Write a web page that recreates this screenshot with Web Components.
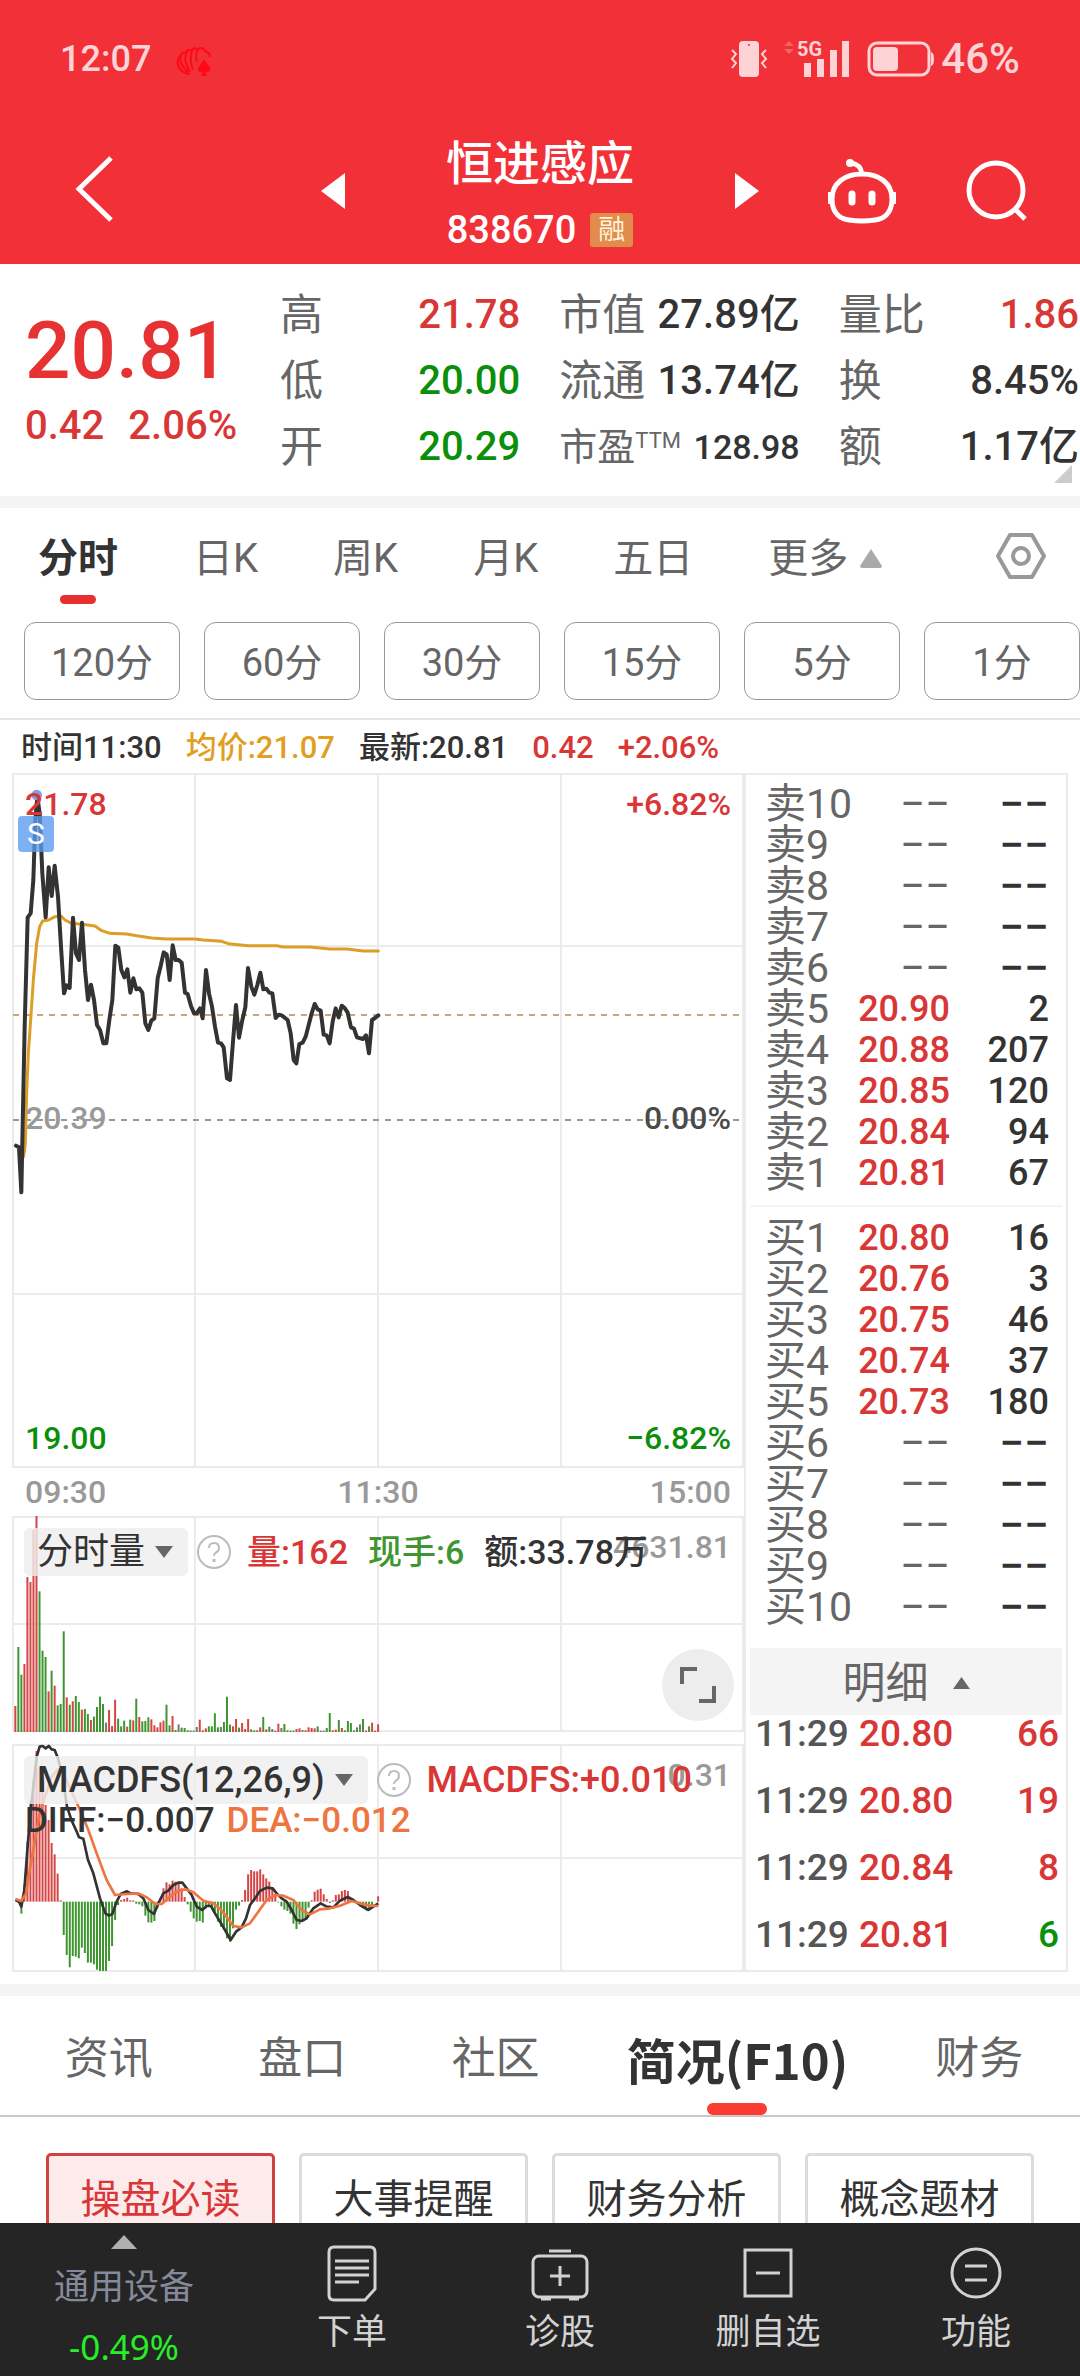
<!DOCTYPE html>
<html lang="zh-CN">
<head>
<meta charset="utf-8">
<meta name="viewport" content="width=device-width, initial-scale=1">
<title>恒进感应 838670</title>
<style>
    :root {
        --red: #d93636;
        --green: #0a8f0a;
        --ink: #333;
        --label: #666;
        --muted: #999;
        --line: #ebebeb;
        --band: #f4f4f4;
    }
    body {
        margin: 0;
        height: 100vh;
        display: flex;
        flex-direction: column;
        background: #fff;
        color: var(--ink);
        font-family: Roboto, "Noto Sans CJK SC", sans-serif;
    }
    main {
        flex: 1;
        min-height: 0;
        overflow: hidden;
    }
    .band {
        height: 12px;
        background: var(--band);
    }
    .trade {
        display: flex;
        padding: 0 12px;
        margin-bottom: 12px;
    }
    .charts {
        flex: 1;
        min-width: 0;
    }
</style>
</head>
<body>
    <status-bar></status-bar>
    <stock-header code="838670" tag="融">恒进感应</stock-header>
    <main>
        <quote-panel></quote-panel>
        <div class="band"></div>
        <period-tabs></period-tabs>
        <minute-pills></minute-pills>
        <chart-info></chart-info>
        <div class="trade">
            <div class="charts">
                <price-chart></price-chart>
                <volume-chart></volume-chart>
                <macd-chart></macd-chart>
            </div>
            <order-book></order-book>
        </div>
        <div class="band"></div>
        <section-tabs></section-tabs>
        <card-links></card-links>
    </main>
    <bottom-bar></bottom-bar>

<script>
const reset = `
    * { box-sizing: border-box; }
    button {
        margin: 0;
        padding: 0;
        border: 0;
        background: none;
        color: inherit;
        font: inherit;
        cursor: pointer;
    }
    a { color: inherit; text-decoration: none; }
    svg { display: block; }
    table { border-collapse: collapse; }
    .red { color: var(--red); }
    .green { color: var(--green); }
`

function define(name, render) {
    class El extends HTMLElement {
        constructor() {
            super()
            this.attachShadow({ mode: 'open' })
        }
        connectedCallback() {
            const template = document.createElement('template')
            template.innerHTML = `<style>${reset}</style>` + render(this)
            this.shadowRoot.replaceChildren(template.content.cloneNode(true))
        }
    }
    window.customElements.define(name, El)
}

define('status-bar', () => `
<style>
    :host {
        display: flex;
        align-items: center;
        padding: 36px 60px 0 60px;
        height: 82px;
        box-sizing: border-box;
        background: #f13037;
        color: #fdd3d5;
        font-weight: 500;
        font-size: 36px;
        line-height: 46px;
    }
    .fan { margin-left: 25px; margin-top: 4px; }
    .right {
        display: flex;
        align-items: center;
        margin-left: auto;
    }
    .net { margin-left: 16px; overflow: visible; }
    .bat { margin-left: 17px; margin-right: 6px; }
    .pct { font-size: 42px; }
</style>
<span>12:07</span>
<svg class="fan" width="37" height="32" viewBox="0 0 37 32" fill="none" stroke="#ff0a14" stroke-width="2">
    <path d="M14 29 C2 27 1 20 2 14 M12 27 C3 18 3 14 6 8 M14 27 C8 16 8 11 12 5 M17 25 C13 14 14 8 18 3 M21 17 C19 10 21 5 24 3 M2 14 Q5 11 6 8 Q10 8 12 5 Q16 6 18 3 Q21 5 24 3 Q28 3 29 6 Q34 8 34 12"/>
    <path fill="#ff0a14" stroke="none" d="M28 14 C30 19 35 21 34 25 C33 28 30 27 29 26 L31 31 H25 L27 26 C25 28 21 27 22 24 C22 21 26 19 28 14Z"/>
</svg>
<div class="right">
    <svg width="38" height="38" viewBox="0 0 38 38" fill="none" stroke="#fdd3d5" stroke-width="2">
        <rect x="9" y="1" width="20" height="36" rx="4" fill="#fdd3d5" stroke="none"/>
        <circle cx="19" cy="5" r="1" fill="#f13037" stroke="none"/>
        <path d="M2 10 L6 14 L2 19 L6 23 L2 28 M36 10 L32 14 L36 19 L32 23 L36 28"/>
    </svg>
    <svg class="net" width="66" height="38" viewBox="0 0 66 38" fill="#fdd3d5">
        <path d="M0 6 L5 1 L10 6Z M0 9 L5 14 L10 9Z" opacity=".3"/>
        <text x="13" y="16" font-size="20" font-weight="700">5G</text>
        <path d="M20 23h7v14h-7z M33 19h7v18h-7z M46 10h7v27h-7z M58 1h7v36h-7z"/>
    </svg>
    <svg class="bat" width="68" height="36" viewBox="0 0 68 36" fill="none" stroke="#fdd3d5" stroke-width="3">
        <rect x="2" y="2" width="60" height="32" rx="8"/>
        <rect x="6" y="6" width="25" height="24" rx="4" fill="#fdd3d5" stroke="none"/>
        <path d="M64 11 q3 1 3 7 t-3 7z" fill="#fdd3d5" stroke="none"/>
    </svg>
    <span class="pct">46%</span>
</div>`)

define('stock-header', el => `
<style>
    :host {
        display: grid;
        grid-template-columns: 1fr 438px 1fr;
        align-items: center;
        padding: 36px 52px 0;
        height: 182px;
        box-sizing: border-box;
        background: #f13037;
        color: #fff;
    }
    .back { padding-left: 20px; }
    .mid {
        display: flex;
        align-items: center;
        justify-content: space-between;
    }
    h1 {
        margin: 12px 0 0;
        font-weight: 500;
        font-size: 47px;
        line-height: 66px;
        text-align: center;
    }
    .code {
        display: flex;
        align-items: center;
        justify-content: center;
        gap: 14px;
        font-size: 38px;
        font-weight: 500;
        line-height: 66px;
    }
    .tag {
        padding: 0 8px;
        border-radius: 3px;
        background: #e28c4b;
        color: #fff3dc;
        font-size: 27px;
        font-weight: 400;
        line-height: 34px;
    }
    .tools {
        display: flex;
        justify-content: flex-end;
        align-items: center;
        gap: 69px;
    }
</style>
<div class="back">
    <button aria-label="返回">
        <svg width="44" height="68" viewBox="0 0 44 68" fill="none" stroke="#fff" stroke-width="5"><path d="M39 3 L7 34 L39 65"/></svg>
    </button>
</div>
<div class="mid">
    <button aria-label="上一只"><svg width="24" height="36" viewBox="0 0 24 36" fill="#fff"><path d="M24 0V36L0 18Z"/></svg></button>
    <div>
        <h1><slot></slot></h1>
        <div class="code"><span>${el.getAttribute('code')}</span><span class="tag">${el.getAttribute('tag')}</span></div>
    </div>
    <button aria-label="下一只"><svg width="24" height="36" viewBox="0 0 24 36" fill="#fff"><path d="M0 0V36L24 18Z"/></svg></button>
</div>
<div class="tools">
    <button aria-label="智能助手">
        <svg width="70" height="66" viewBox="0 0 70 66" fill="none" stroke="#fff" stroke-width="5">
            <path d="M35 16 C52 16 65 25 65 41 C65 56 56 61 48 62 Q35 64 22 62 C14 61 5 56 5 41 C5 25 18 16 35 16Z"/>
            <path d="M35 16 C34 9 31 6 24 5"/>
            <circle cx="23" cy="5" r="4" fill="#fff" stroke="none"/>
            <path d="M3 34V46 M67 34V46" stroke-width="4"/>
            <path d="M25 36V44 M45 36V44" stroke-width="7" stroke-linecap="round"/>
        </svg>
    </button>
    <button aria-label="搜索">
        <svg width="62" height="62" viewBox="0 0 62 62" fill="none" stroke="#fff" stroke-width="5"><circle cx="30" cy="30" r="27"/><path d="M49 49 L59 59"/></svg>
    </button>
</div>`)

const stats = [
    [['高', '21.78', 'red'], ['低', '20.00', 'green'], ['开', '20.29', 'green']],
    [['市值', '27.89亿', ''], ['流通', '13.74亿', ''], ['市盈<sup>TTM</sup>', '128.98', 'small']],
    [['量比', '1.86', 'red'], ['换', '8.45%', ''], ['额', '1.17亿', '']],
]

define('quote-panel', () => `
<style>
    :host {
        display: grid;
        grid-template-columns: 216px repeat(3, 1fr);
        column-gap: 39px;
        align-items: center;
        padding: 18px 1px 16px 25px;
        position: relative;
    }
    .now {
        font-size: 80px;
        font-weight: 500;
        line-height: 90px;
        color: #e63232;
    }
    .diff {
        display: flex;
        gap: 24px;
        font-size: 40px;
        font-weight: 500;
        line-height: 60px;
        white-space: nowrap;
    }
    dl { margin: 0; }
    dl div {
        display: flex;
        justify-content: space-between;
        line-height: 66px;
        white-space: nowrap;
    }
    dt { font-size: 43px; color: var(--label); }
    dd { margin: 0; font-size: 40px; font-weight: 500; }
    .wrap-small dt { font-size: 38px; }
    .wrap-small dd { font-size: 34px; }
    sup { font-size: 22px; line-height: 0; vertical-align: 12px; }
    .more {
        position: absolute;
        right: 8px;
        bottom: 13px;
    }
</style>
<div>
    <div class="now">20.81</div>
    <div class="diff red"><span>0.42</span><span>2.06%</span></div>
</div>
${stats.map(col => `<dl>${col.map(([k, v, c]) => `<div class="wrap-${c}"><dt>${k}</dt><dd class="${c}">${v}</dd></div>`).join('')}</dl>`).join('')}
<svg class="more" width="18" height="18" viewBox="0 0 18 18" fill="#ccc"><path d="M18 0V18H0Z"/></svg>`)

define('period-tabs', () => `
<style>
    :host {
        display: flex;
        align-items: flex-start;
        gap: 75px;
        padding: 22px 34px 18px 38px;
        font-size: 40px;
        line-height: 58px;
        color: var(--label);
    }
    button {
        display: flex;
        align-items: center;
        white-space: nowrap;
    }
    .on {
        flex-direction: column;
        color: var(--ink);
        font-weight: 700;
    }
    .on::after {
        content: "";
        width: 36px;
        height: 9px;
        margin-top: 7px;
        border-radius: 5px;
        background: #e62f2f;
    }
    .more { gap: 11px; }
    .set { margin-left: auto; margin-top: 2px; }
</style>
<button class="on">分时</button>
<button>日K</button>
<button>周K</button>
<button>月K</button>
<button>五日</button>
<button class="more">更多<svg width="24" height="20" viewBox="0 0 24 20" fill="#aaa"><path d="M12 0 L23 17 Q23 19 21 19 H3 Q1 19 1 17Z"/></svg></button>
<button class="set" aria-label="设置">
    <svg width="50" height="48" viewBox="0 0 50 48" fill="none" stroke="#999" stroke-width="4" stroke-linejoin="round">
        <path d="M14 3 H36 L48 24 L36 45 H14 L2 24Z"/><circle cx="25" cy="24" r="8"/>
    </svg>
</button>`)

define('minute-pills', () => `
<style>
    :host {
        display: grid;
        grid-template-columns: repeat(6, 1fr);
        gap: 24px;
        padding: 0 0 18px 24px;
        border-bottom: 2px solid #e6e6e6;
    }
    button {
        padding-top: 4px;
        border: 1px solid #999;
        border-radius: 12px;
        color: var(--label);
        font-size: 38px;
        line-height: 72px;
    }
</style>
${['120分', '60分', '30分', '15分', '5分', '1分'].map(t => `<button>${t}</button>`).join('')}`)

define('chart-info', () => `
<style>
    :host {
        display: flex;
        gap: 24px;
        padding: 3px 21px 0;
        font-size: 31px;
        line-height: 50px;
        white-space: nowrap;
        font-weight: 500;
    }
    .avg { color: #dfa01f; }
</style>
<span>时间11:30</span>
<span class="avg">均价:21.07</span>
<span>最新:20.81</span>
<span class="red">0.42</span>
<span class="red">+2.06%</span>`)

const paneStyle = `
    :host { display: block; }
    .pane { position: relative; }
    .pane > svg { width: 100%; height: auto; }
    .lb {
        position: absolute;
        font-size: 32px;
        font-weight: 500;
        line-height: 40px;
    }
    .l { left: 13px; }
    .r { right: 13px; }
    .grey { color: var(--muted); }
    .legend {
        position: absolute;
        left: 12px;
        top: 12px;
        display: flex;
        align-items: center;
        white-space: nowrap;
        font-weight: 500;
        line-height: 48px;
    }
    .pick {
        display: flex;
        align-items: center;
        gap: 10px;
        padding: 0 15px 0 13px;
        border-radius: 6px;
        background: rgba(238, 238, 238, .8);
    }
    .help { margin: 0 15px 0 8px; }
`

const caret = '<svg width="18" height="12" viewBox="0 0 18 12" fill="#666"><path d="M0 0H18L9 12Z"/></svg>'
const help = `<button class="help" aria-label="说明"><svg width="36" height="36" viewBox="0 0 36 36" fill="none" stroke="#bbb" stroke-width="2">
    <circle cx="18" cy="18" r="16"/><path d="M13 14 Q13 9 18 9 T23 14 Q23 17 20 18.500 Q18 20 18 22"/><path d="M18 25V28" stroke-width="3"/></svg></button>`

// frame, three columns and a list of horizontal rules
function grid(h, rows) {
    return `<g fill="none" stroke="#ebebeb" stroke-width="2">
        <path d="M1 1H731V${h - 1}H1Z M183 1V${h - 1} M366 1V${h - 1} M549 1V${h - 1}"/>
        ${rows.map(y => `<path d="M1 ${y}H731"/>`).join('')}
    </g>`
}

// one bar per minute, the series is drawn at three units to the pixel
const barX = i => 46 + 9.07 * i

const priceLine = '48,1157 57,1162 64,1297 74,800 83,472 92,460 100,360 106,180 112,110 119,160 127,340 137,472 146,322 155,408 164,317 174,410 183,560 192,700 200,676 209,684 219,473 228,580 237,600 246,488 255,630 264,720 273,674 282,720 291,795 300,810 310,850 319,850 328,780 337,720 346,557 355,563 364,630 373,652 382,628 391,698 400,655 409,688 418,685 427,698 436,790 445,810 454,782 463,775 473,655 482,618 491,577 500,583 509,660 518,556 527,600 536,600 545,608 555,698 563,702 573,738 582,760 590,760 600,745 608,775 618,630 627,700 636,740 645,800 654,848 663,850 671,862 681,955 690,960 699,845 708,735 717,833 727,780 736,742 744,624 754,680 763,704 772,675 781,638 790,688 799,686 808,698 817,700 827,774 836,764 845,766 863,780 872,820 881,900 889,910 898,852 908,848 917,830 935,760 944,732 953,748 962,752 971,824 980,826 989,850 998,785 1007,745 1016,772 1025,737 1034,744 1043,758 1053,802 1062,806 1071,832 1089,837 1098,826 1107,880 1116,780 1125,774 1135,766'
const avgLine = '71,1190 76,1150 80,1000 85,880 92,780 100,660 110,550 119,500 128,483 146,480 165,470 183,468 195,480 215,490 246,493 285,498 305,512 330,520 380,522 410,527 455,534 500,537 585,537 610,540 665,544 685,551 745,557 830,557 850,561 930,561 990,567 1040,567 1090,573 1135,573'

define('price-chart', () => `
<style>
    ${paneStyle}
    .s {
        position: absolute;
        left: 6px;
        top: 43px;
        width: 36px;
        border-radius: 4px;
        background: rgba(90, 155, 240, .78);
        color: #fff;
        font-size: 30px;
        line-height: 36px;
        text-align: center;
    }
    .zero { color: #4a4a4a; }
    .times {
        display: grid;
        grid-template-columns: repeat(3, 1fr);
        padding: 0 13px;
        color: var(--muted);
        font-size: 32px;
        font-weight: 500;
        line-height: 48px;
        text-align: center;
    }
    .times :first-child { text-align: left; }
    .times :last-child { text-align: right; }
</style>
<div class="pane">
    <svg viewBox="0 0 732 695">
        ${grid(695, [173, 521])}
        <path d="M1 242H730" stroke="#c9a877" stroke-width="2" stroke-dasharray="6 6"/>
        <path d="M1 347H730" stroke="#999" stroke-width="2" stroke-dasharray="6 6"/>
        <g transform="translate(-12 -13) scale(.33333)" fill="none" stroke-linejoin="round" stroke-linecap="round">
            <polyline points="${avgLine}" stroke="#dc9e24" stroke-width="9"/>
            <polyline points="${priceLine}" stroke="#333" stroke-width="12"/>
            <circle cx="110" cy="105" r="16" fill="#7f9fe6"/>
        </g>
    </svg>
    <div class="s">S</div>
    <div class="lb l red" style="top:11px">21.78</div>
    <div class="lb r red" style="top:11px">+6.82%</div>
    <div class="lb l grey" style="top:325px">20.39</div>
    <div class="lb r zero" style="top:325px">0.00%</div>
    <div class="lb l green" style="top:645px">19.00</div>
    <div class="lb r green" style="top:645px">−6.82%</div>
</div>
<div class="times"><span>09:30</span><span>11:30</span><span>15:00</span></div>`)

const volume = 'r78 g255 g172 r204 r465 r450 r606 r648 g422 g244 g225 r122 g184 r139 g80 g84 g302 r104 g82 r92 g108 g90 r67 g69 g54 r36 g46 g75 g106 g84 n28 r66 r18 r97 g40 g17 g34 r16 g37 r35 g100 r45 g32 g33 g44 r38 r20 r14 r29 r34 g82 g20 r48 g6 n23 g13 g12 g5 g4 g4 n15 r37 g5 r11 g17 g17 g56 g14 n15 g30 g106 g22 r17 r39 g13 r27 r9 r39 g8 g5 r5 r14 g45 r8 g16 n9 r4 r25 n12 g24 g5 g4 g4 r9 r11 n6 r5 r14 r12 r11 g17 n4 n4 g12 g57 r5 r7 g36 r12 g5 g33 g27 n5 g14 n23 g39 r4 g17 r28 r4 r23'
const tone = { r: '#d64545', g: '#3f9630', n: '#777' }

define('volume-chart', () => `
<style>
    ${paneStyle}
    :host { margin-bottom: 12px; }
    .legend { font-size: 34px; }
    .pick { font-size: 36px; font-weight: 400; }
    .vals { display: flex; gap: 20px; }
    .full {
        position: absolute;
        right: 10px;
        bottom: 11px;
        width: 72px;
        height: 72px;
        border-radius: 50%;
        background: #ededed;
    }
    .full svg { margin: 0 auto; }
</style>
<div class="pane">
    <svg viewBox="0 0 732 216">
        ${grid(216, [108])}
        <g transform="translate(-12 0) scale(.33333)">
            ${volume.split(' ').map((v, i) => `<rect x="${barX(i) - 3}" y="${648 - v.slice(1)}" width="6" height="${v.slice(1)}" fill="${tone[v[0]]}"/>`).join('')}
        </g>
    </svg>
    <div class="lb r grey" style="top:11px">4631.81</div>
    <div class="legend">
        <button class="pick">分时量${caret}</button>${help}
        <div class="vals"><span class="red">量:162</span><span style="color:#3f9630">现手:6</span><span>额:33.78万</span></div>
    </div>
    <button class="full" aria-label="全屏"><svg width="38" height="38" viewBox="0 0 38 38" fill="none" stroke="#666" stroke-width="4"><path d="M3 18V3H18 M20 35H35V20"/></svg></button>
</div>`)

const macd = [0, 0, -36, 50, 180, 300, 368, 452, 400, 350, 290, 245, 176, 142, 84, 4, -100, -160, -197, -163, -165, -170, -138, -154, -183, -183, -188, -204, -208, -208, -208, -178, -133, -55, -10, 5, 8, 12, 4, 4, -6, -8, -14, -42, -62, -63, -58, -20, 2, 40, 58, 52, 63, 60, 58, 40, 14, -8, -30, -50, -60, -58, -63, -20, -12, -14, -30, -60, -75, -85, -110, -120, -80, -24, -12, 5, 35, 82, 95, 91, 91, 97, 82, 70, 60, 38, 20, -2, -14, -24, -28, -36, -66, -82, -68, -58, -50, -18, 4, 30, 36, 39, 22, 8, -4, 4, 20, 22, 32, 35, 32, 10, 4, -4, -12, -14, -20, -26, -14, 0, 16]
const diffLine = '46,510 57,515 64,530 73,480 82,360 91,250 100,170 110,80 119,50 128,48 137,55 146,48 155,58 164,60 174,85 183,120 192,170 201,230 215,272 228,300 237,322 250,326 264,390 280,430 300,505 316,550 327,557 337,552 350,515 362,492 381,484 392,490 415,492 430,505 445,540 462,552 475,520 490,490 505,482 520,465 535,458 547,458 560,475 575,495 590,530 607,540 620,528 633,528 645,550 660,575 675,600 692,630 708,605 725,592 738,565 750,525 765,505 780,483 800,473 818,475 830,490 845,505 860,515 875,540 890,570 905,573 920,565 940,535 962,520 980,530 1000,532 1020,512 1043,501 1060,510 1080,525 1105,540 1120,530 1135,520'
const deaLine = '46,507 64,513 78,490 91,410 105,330 119,250 137,195 155,140 174,118 190,130 210,175 240,240 265,300 290,370 320,450 345,495 380,492 415,490 440,502 465,522 485,522 510,500 535,482 557,478 580,487 610,512 640,520 660,537 680,560 700,588 725,592 750,580 775,545 800,510 825,495 850,497 880,510 905,540 930,553 960,538 990,535 1020,527 1055,513 1080,520 1110,527 1135,528'

define('macd-chart', () => `
<style>
    ${paneStyle}
    .legend { font-size: 36px; }
    .second {
        position: absolute;
        left: 13px;
        top: 57px;
        display: flex;
        gap: 12px;
        font-size: 35px;
        font-weight: 500;
        line-height: 40px;
        white-space: nowrap;
    }
    .dea { color: #ee7540; }
</style>
<div class="pane">
    <svg viewBox="0 0 732 228">
        ${grid(228, [114])}
        <g transform="translate(-12 -14) scale(.33333)">
            ${macd.map((v, i) => `<rect x="${barX(i) - 3}" y="${v > 0 ? 515 - v : 515}" width="6" height="${Math.abs(v)}" fill="${v > 0 ? tone.r : tone.g}"/>`).join('')}
            <g fill="none" stroke-linejoin="round">
                <polyline points="${diffLine}" stroke="#333" stroke-width="8"/>
                <polyline points="${deaLine}" stroke="#ee7540" stroke-width="8"/>
            </g>
        </g>
    </svg>
    <div class="lb r grey" style="top:11px">0.31</div>
    <div class="legend">
        <button class="pick">MACDFS(12,26,9)${caret}</button>${help}
        <span class="red">MACDFS:+0.010</span>
    </div>
    <div class="second"><span>DIFF:−0.007</span><span class="dea">DEA:−0.012</span></div>
</div>`)

const none = '−−'
const asks = [['卖10'], ['卖9'], ['卖8'], ['卖7'], ['卖6'], ['卖5', '20.90', 2], ['卖4', '20.88', 207], ['卖3', '20.85', 120], ['卖2', '20.84', 94], ['卖1', '20.81', 67]]
const bids = [['买1', '20.80', 16], ['买2', '20.76', 3], ['买3', '20.75', 46], ['买4', '20.74', 37], ['买5', '20.73', 180], ['买6'], ['买7'], ['买8'], ['买9'], ['买10']]
const ticks = [['11:29', '20.80', 66, 'red'], ['11:29', '20.80', 19, 'red'], ['11:29', '20.84', 8, 'red'], ['11:29', '20.81', 6, 'green']]

const level = ([name, price, vol]) => `<tr><th>${name}</th>${price
    ? `<td class="red">${price}</td><td>${vol}</td>`
    : `<td class="none grey">${none}</td><td class="none">${none}</td>`}</tr>`

define('order-book', () => `
<style>
    :host {
        display: block;
        width: 324px;
        box-sizing: border-box;
        padding: 9px 4px 0;
        border: 2px solid #ebebeb;
    }
    table {
        width: 100%;
        table-layout: fixed;
        font-size: 36px;
        font-weight: 500;
    }
    th, td { padding: 0; text-align: right; }
    .levels th, .levels td {
        height: 41px;
        line-height: 41px;
    }
    .levels th {
        width: 106px;
        padding-left: 15px;
        box-sizing: border-box;
        font-size: 41px;
        font-weight: 400;
        color: var(--label);
        text-align: left;
        white-space: nowrap;
    }
    .levels td:nth-child(2) { width: 94px; }
    .levels td:last-child { padding-right: 13px; }
    .levels .none { font-size: 44px; font-weight: 400; }
    .levels .none:last-child { font-weight: 500; }
    .grey { color: var(--label); }
    hr {
        margin: 11px 0;
        border: 0;
        border-top: 2px solid var(--band);
    }
    .detail {
        display: flex;
        align-items: center;
        justify-content: center;
        gap: 24px;
        width: 100%;
        margin-top: 20px;
        padding-top: 3px;
        background: var(--band);
        color: var(--label);
        font-size: 43px;
        line-height: 64px;
    }
    .ticks { font-size: 37px; }
    .ticks td { line-height: 38px; padding-bottom: 29px; }
    .ticks tr:last-child td { padding-bottom: 16px; }
    .ticks td:first-child { width: 109px; padding-left: 5px; color: #555; text-align: left; }
    .ticks td:nth-child(2) { width: 94px; text-align: left; }
    .ticks td:last-child { padding-right: 3px; }
</style>
<table class="levels">${asks.map(level).join('')}</table>
<hr>
<table class="levels">${bids.map(level).join('')}</table>
<button class="detail">明细<svg width="17" height="12" viewBox="0 0 17 12" fill="#666"><path d="M8.500 0L17 12H0Z"/></svg></button>
<table class="ticks">${ticks.map(([t, p, v, c]) => `<tr><td>${t}</td><td class="red">${p}</td><td class="${c}">${v}</td></tr>`).join('')}</table>`)

define('section-tabs', () => `
<style>
    :host {
        display: grid;
        grid-template-columns: 2fr 2fr 2fr 3fr 2fr;
        padding: 31px 4px 0 12px;
        border-bottom: 2px solid #c8c8c8;
        color: var(--label);
        font-size: 44px;
        line-height: 64px;
    }
    button {
        display: flex;
        flex-direction: column;
        align-items: center;
        height: 88px;
    }
    .on {
        color: var(--ink);
        font-family: "Noto Sans CJK SC", sans-serif;
        font-size: 49px;
        font-weight: 700;
    }
    .on::after {
        content: "";
        width: 60px;
        height: 12px;
        margin-top: 12px;
        border-radius: 6px;
        background: #fa3c32;
    }
</style>
<button>资讯</button>
<button>盘口</button>
<button>社区</button>
<button class="on">简况(F10)</button>
<button>财务</button>`)

define('card-links', () => `
<style>
    :host {
        display: grid;
        grid-template-columns: repeat(4, 1fr);
        gap: 24px;
        padding: 36px 46px;
    }
    a {
        padding-top: 2px;
        border: 3px solid #dcdcdc;
        border-radius: 5px;
        font-size: 40px;
        line-height: 84px;
        text-align: center;
        white-space: nowrap;
    }
    .on {
        border-color: #d04040;
        background: #fdeaea;
        color: var(--red);
    }
</style>
<a href="#" class="on">操盘必读</a>
<a href="#">大事提醒</a>
<a href="#">财务分析</a>
<a href="#">概念题材</a>`)

define('bottom-bar', () => `
<style>
    :host {
        display: grid;
        grid-template-columns: 248px repeat(4, 1fr);
        background: #252525;
        color: #d2d2d2;
        font-size: 35px;
    }
    button {
        display: flex;
        flex-direction: column;
        align-items: center;
        padding: 20px 0 15px;
        line-height: 56px;
    }
    .icon { margin-bottom: 2px; }
    .index {
        padding: 12px 0 0;
        line-height: 59px;
        color: #858a9a;
    }
    .index svg { margin-bottom: 9px; }
    .index .pct {
        font-family: "Noto Sans", sans-serif;
        color: #28ee28;
    }
    .icon { fill: none; stroke: #d2d2d2; stroke-width: 3; }
</style>
<button class="index">
    <svg width="26" height="14" viewBox="0 0 26 14" fill="#b0b0b0"><path d="M13 0L26 14H0Z"/></svg>
    <span>通用设备</span>
    <span class="pct">-0.49%</span>
</button>
<button>
    <svg class="icon" width="60" height="60" viewBox="0 0 60 60"><path d="M12 4H48Q53 4 53 9V46L43 57H12Q7 57 7 52V9Q7 4 12 4Z M13 18H47 M13 25H47 M13 32H47 M13 39H37"/></svg>
    下单
</button>
<button>
    <svg class="icon" width="60" height="60" viewBox="0 0 60 60"><path d="M19 8H41"/><rect x="3" y="13" width="54" height="41" rx="6"/><path d="M20 33H40 M30 23V43 M11 56H21 M39 56H49"/></svg>
    诊股
</button>
<button>
    <svg class="icon" width="60" height="60" viewBox="0 0 60 60"><path d="M7 7H53V53H7Z M18 30H42"/></svg>
    删自选
</button>
<button>
    <svg class="icon" width="60" height="60" viewBox="0 0 60 60"><circle cx="30" cy="30" r="24"/><path d="M19 23H41 M19 37H41"/></svg>
    功能
</button>`)
</script>
</body>
</html>
